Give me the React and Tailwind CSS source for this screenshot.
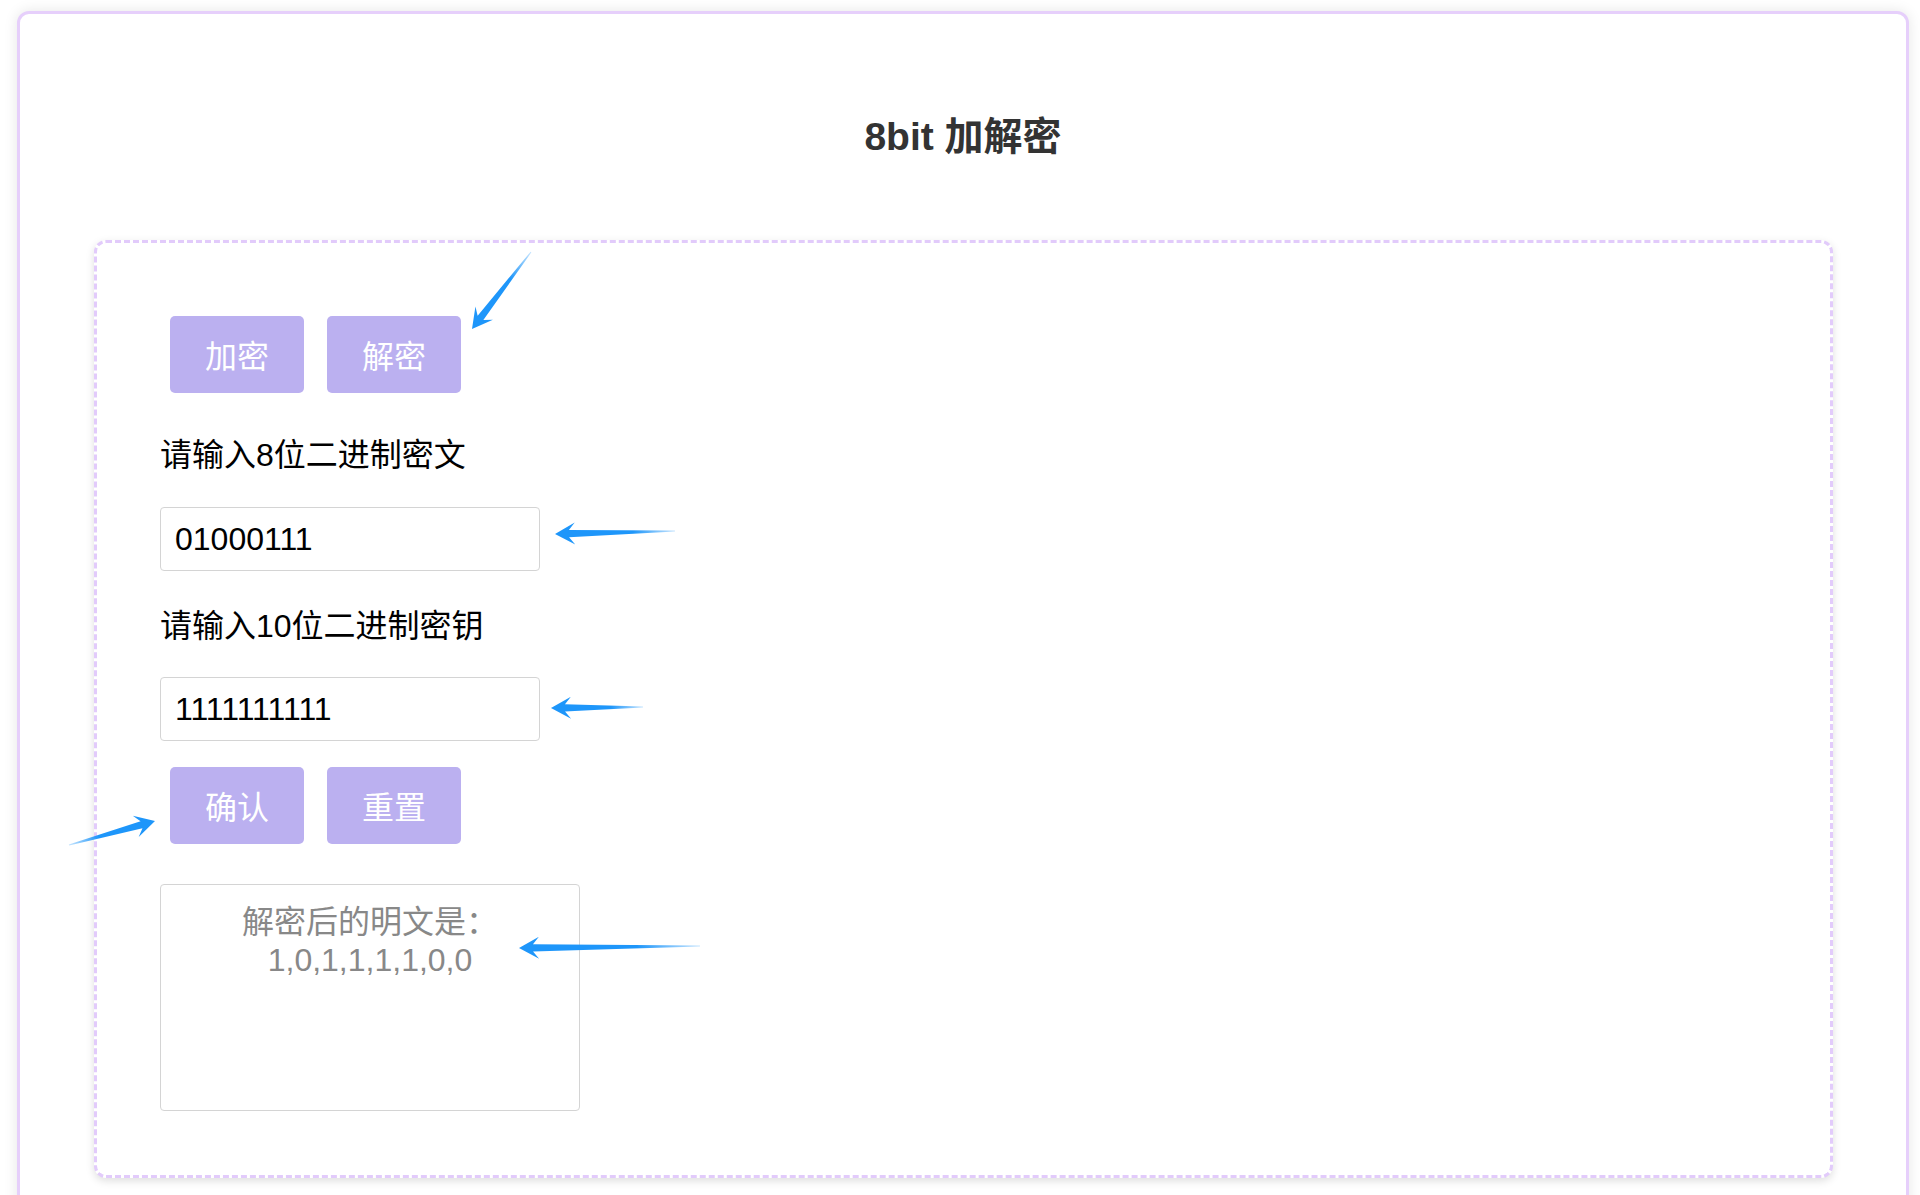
import { useState } from 'react'

const FONT = "font-['Liberation_Sans','Noto_Sans_CJK_SC',sans-serif]"

// blue callout arrows drawn over the page: tail -> head, page coords
const ARROWS = [
  { from: [531, 252], to: [472, 329] },
  { from: [675, 531], to: [555, 534] },
  { from: [643, 707], to: [551, 708] },
  { from: [69, 845], to: [155, 821] },
  { from: [700, 946], to: [519, 948] },
]

function Arrow({ from, to, id }) {
  const dx = from[0] - to[0]
  const dy = from[1] - to[1]
  const len = Math.sqrt(dx * dx + dy * dy)
  const angle = (Math.atan2(dy, dx) * 180) / Math.PI
  const d = `M0 0 L20 -11 L14 -3.6 L${len} -0.5 L${len} 0.5 L14 3.6 L20 11 Z`
  return (
    <g transform={`translate(${to[0]} ${to[1]}) rotate(${angle})`}>
      <path d={d} fill={`url(#${id})`} />
    </g>
  )
}

function ArrowLayer() {
  return (
    <svg className="absolute left-0 top-0 pointer-events-none" width="1920" height="1195">
      <defs>
        {ARROWS.map((_, i) => (
          <linearGradient key={i} id={`ag${i}`} x1="0" y1="0" x2="1" y2="0">
            <stop offset="0" stopColor="#1e96fa" />
            <stop offset="0.65" stopColor="#1e96fa" />
            <stop offset="1" stopColor="#1e96fa" stopOpacity="0.25" />
          </linearGradient>
        ))}
      </defs>
      {ARROWS.map((a, i) => (
        <Arrow key={i} id={`ag${i}`} {...a} />
      ))}
    </svg>
  )
}

function PurpleButton({ children }) {
  return (
    <button className="w-[134px] h-[77px] pt-[4px] rounded-[5px] bg-[#bbb0f0] text-white text-[32px] leading-none">
      {children}
    </button>
  )
}

export default function App() {
  const [cipher, setCipher] = useState('01000111')
  const [key, setKey] = useState('1111111111')

  return (
    <div className={`relative h-[1195px] overflow-hidden bg-white ${FONT}`}>
      <div className="ml-[17px] mr-[11px] mt-[11px] h-[1230px] rounded-[12px] border-[3px] border-[#e6cffb] bg-white shadow-[0_0_14px_rgba(0,0,0,0.1)] pt-[100px]">
        <h2 className="text-center text-[39px] leading-[46px] font-bold text-[#333]">8bit 加解密</h2>

        <div className="ml-[74px] mr-[73px] mt-[80px] rounded-[12px] border-[3px] border-dashed border-[#e2cbfb] bg-white shadow-[0_3px_8px_rgba(0,0,0,0.13)] pl-[63px] pt-[73px] pb-[64px]">
          <div className="ml-[10px] flex gap-[23px]">
            <PurpleButton>加密</PurpleButton>
            <PurpleButton>解密</PurpleButton>
          </div>

          <p className="mt-[43px] text-[32px] leading-[38px] text-black">请输入8位二进制密文</p>
          <input
            value={cipher}
            onChange={e => setCipher(e.target.value)}
            className="mt-[33px] block w-[380px] h-[64px] rounded-[4px] border border-[#d4d4d4] px-[14px] text-[32px] text-black outline-none"
          />

          <p className="mt-[36px] text-[32px] leading-[38px] text-black">请输入10位二进制密钥</p>
          <input
            value={key}
            onChange={e => setKey(e.target.value)}
            className="mt-[32px] block w-[380px] h-[64px] rounded-[4px] border border-[#d4d4d4] px-[14px] text-[32px] text-black outline-none"
          />

          <div className="mt-[26px] ml-[10px] flex gap-[23px]">
            <PurpleButton>确认</PurpleButton>
            <PurpleButton>重置</PurpleButton>
          </div>

          <div className="mt-[40px] w-[420px] h-[227px] rounded-[4px] border border-[#d4d4d4] pt-[18px] text-center text-[32px] leading-[38px] text-[#888]">
            <p>解密后的明文是：</p>
            <p>1,0,1,1,1,1,0,0</p>
          </div>
        </div>
      </div>

      <ArrowLayer />
    </div>
  )
}
